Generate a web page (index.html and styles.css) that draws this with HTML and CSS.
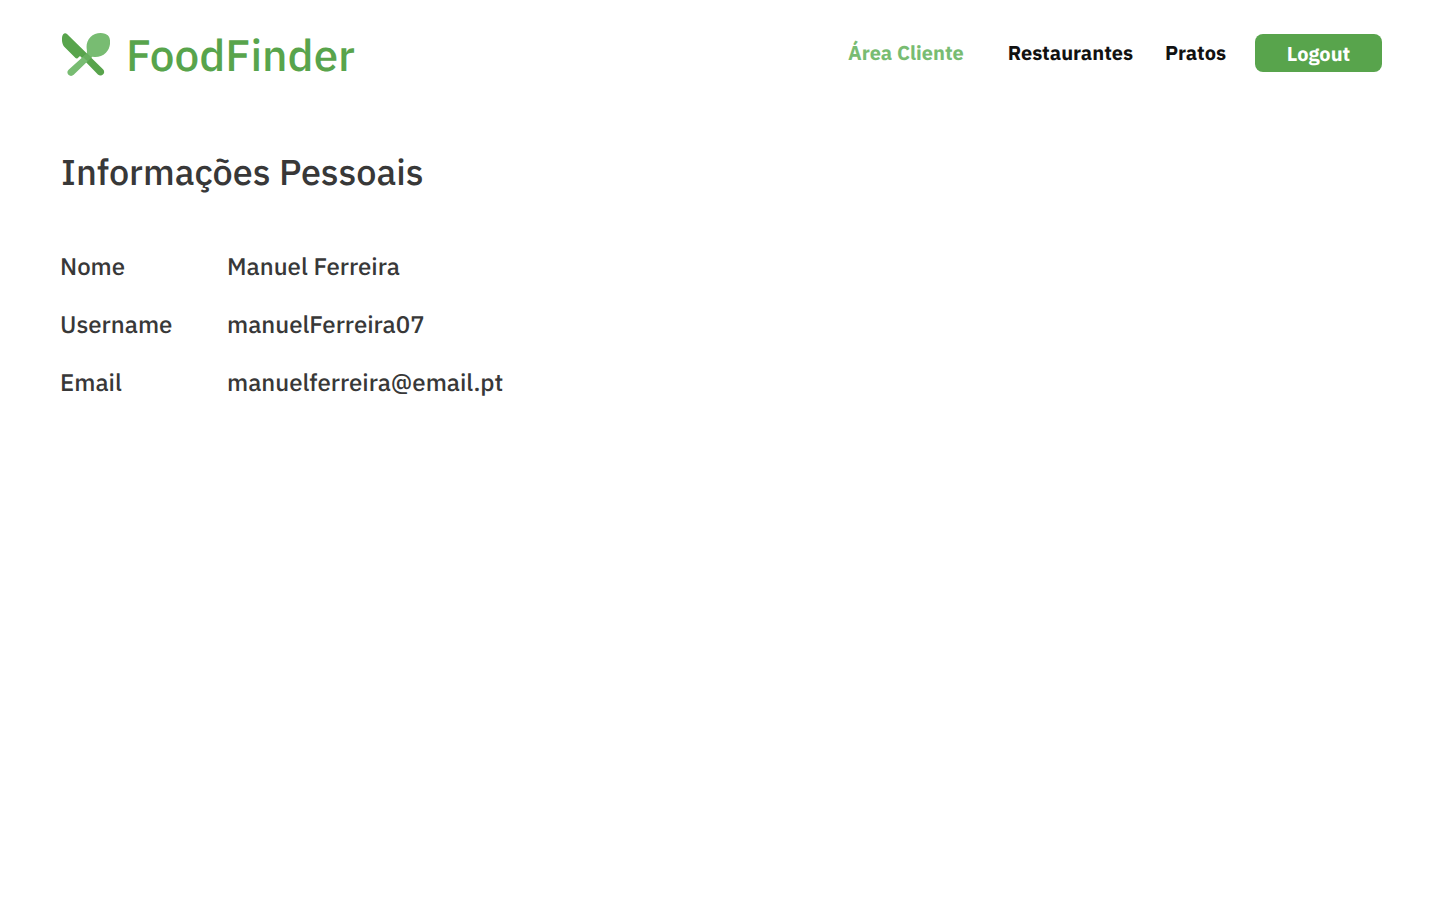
FILE: index.html
```html
<!DOCTYPE html>
<html lang="pt">
<head>
<meta charset="utf-8">
<meta name="viewport" content="width=device-width, initial-scale=1">
<title>FoodFinder</title>
<link rel="stylesheet" href="styles.css">
</head>
<body>
<header class="header">
  <a class="brand" href="#">
    <svg class="brand-icon" viewBox="0 0 48 43" aria-hidden="true">
      <path d="M1.200 1.200C2.300 0 3.900 0 5 1.100L41 36.300c1.600 1.600 1.500 3.600.2 5-1.400 1.600-3.800 1.700-5.300.2L18 22.900l-2.400 2.300c-.7.6-1.500.5-2.100-.1L2 13.400C-.6 10-.6 3.500 1.200 1.200Z" fill="#58a44c"/>
      <path d="M43 .8C38.500-.8 32 .3 28.500 3.900 24.800 7.600 24 12.500 24.900 17.300L24.900 20.300 6.600 36.700c-1.600 1.500-1.600 3.600-.2 5.100 1.400 1.500 3.800 1.500 5.300 0L30.300 23.800l2.200.2c4.100.2 8.300-1.200 11.400-4.300C47.900 15.800 48.900 9.700 47.500 5 46.800 2.800 45.100 1.500 43 .8Z" fill="#78bc72"/>
      <path d="m24.900 20.300 4.800 4.100-4 3.900-4.800-4.400Z" fill="#58a44c" opacity=".5"/>
    </svg>
    <span>FoodFinder</span>
  </a>
  <nav class="nav">
    <a class="nav-link nav-link-active" href="#">Área Cliente</a>
    <a class="nav-link" href="#">Restaurantes</a>
    <a class="nav-link" href="#">Pratos</a>
  </nav>
  <button class="logout" type="button">Logout</button>
</header>
<main class="content">
  <h1 class="title">Informações Pessoais</h1>
  <dl class="details">
    <dt>Nome</dt><dd>Manuel Ferreira</dd>
    <dt>Username</dt><dd>manuelFerreira07</dd>
    <dt>Email</dt><dd>manuelferreira@email.pt</dd>
  </dl>
</main>
</body>
</html>
```

FILE: styles.css
```css
* { box-sizing: border-box; }
body {
  margin: 0;
  background: #fff;
  color: #383838;
  font-family: "IBM Plex Sans", "Noto Sans", sans-serif;
  font-weight: 500;
  text-rendering: geometricPrecision;
}
.header {
  display: flex;
  align-items: center;
  padding: 23px 58px 0 62px;
}
.brand {
  display: flex;
  align-items: flex-start;
  gap: 16px;
  margin-right: auto;
  color: #58a44c;
  font-size: 44px;
  line-height: 60px;
  padding-top: 3px;
  margin-bottom: -3px;
  text-decoration: none;
}
.brand-icon {
  width: 48px;
  height: 43px;
  margin-top: 7px;
}
.nav {
  display: flex;
  gap: 32px;
  margin-right: 29px;
}
.nav-link {
  color: #111;
  font-size: 20px;
  font-weight: 700;
  line-height: 28px;
  text-decoration: none;
}
.nav-link-active {
  margin-right: 12px;
  color: #78bc72;
}
.logout {
  width: 127px;
  height: 38px;
  padding: 0;
  border: 0;
  border-radius: 8px;
  background: #58a44c;
  color: #fff;
  font: inherit;
  font-size: 20px;
  font-weight: 700;
  text-rendering: inherit;
  cursor: pointer;
}
.content { padding: 65px 60px; }
.title {
  margin: 0;
  padding-left: 1px;
  font-size: 36px;
  font-weight: 500;
  line-height: 48px;
}
.details {
  display: grid;
  grid-template-columns: 167px 1fr;
  row-gap: 26px;
  margin: 54px 0 0;
  font-size: 24px;
  line-height: 32px;
}
.details dd { margin: 0; }
```
